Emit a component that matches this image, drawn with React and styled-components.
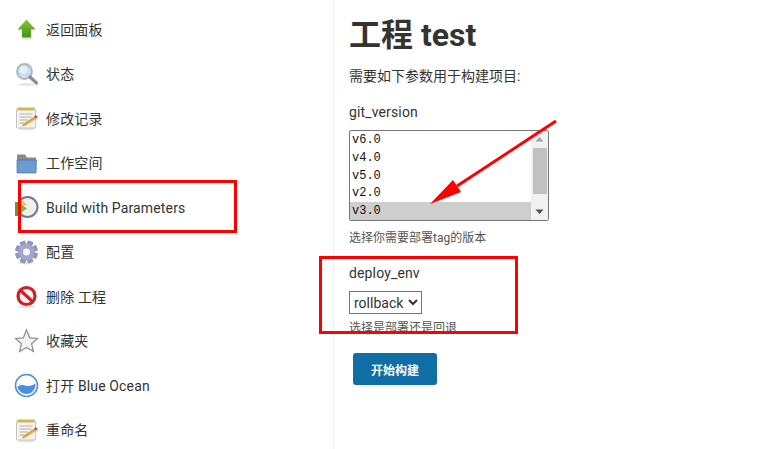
import React from "react";
import styled, { createGlobalStyle } from "styled-components";

const Global = createGlobalStyle`
  html, body { margin: 0; padding: 0; background: #fff; }
  body { width: 759px; height: 449px; overflow: hidden; font-family: Roboto, "Noto Sans CJK SC", sans-serif; color: #333; }
`;
const Page = styled.div`position: relative; display: flex; width: 759px; height: 449px; overflow: hidden;`;
const Sidebar = styled.nav`
  width: 334px; height: 449px; box-sizing: border-box; border-right: 1px solid #eee;
  padding: 7.6px 0 0 14px; display: flex; flex-direction: column; flex: none;
`;
const Row = styled.div`display: flex; align-items: center; gap: 7px; height: 44.5px; flex: none;`;
const IconBox = styled.span`width: 25px; height: 25px; display: flex; align-items: center; justify-content: center; flex: none;`;
const Label = styled.span`font-size: 14px; line-height: 18px; letter-spacing: 0.14px; color: #333; white-space: nowrap;`;
const Main = styled.main`padding: 12px 0 0 15px; display: flex; flex-direction: column; align-items: flex-start;`;
const Title = styled.h1`margin: 0; font-size: 32px; line-height: 46px; font-weight: 700; color: #333;`;
const Intro = styled.p`margin: 8px 0 0; font-size: 14px; line-height: 20px;`;
const ParamName = styled.div`margin-top: ${p => p.$top}px; font-size: 14px; line-height: 20px; letter-spacing: 0.14px;`;
const ListBox = styled.div`
  margin-top: 8px; width: 200px; height: 91px; box-sizing: border-box; border: 1px solid #767676; border-radius: 2px;
  display: flex; overflow: hidden; background: #fff;
`;
const Options = styled.div`flex: 1; display: flex; flex-direction: column;`;
const Option = styled.div`
  height: 17.8px; line-height: 19px; padding-left: 2px; flex: none; font-family: "Liberation Mono", monospace; font-size: 12px; color: #111;
  background: ${p => (p.$selected ? "#cecece" : "transparent")};
`;
const Track = styled.div`width: 17px; flex: none; background: #f1f1f1; display: flex; flex-direction: column; align-items: center;`;
const ArrowBtn = styled.svg`width: 17px; height: 17px; flex: none;`;
const Thumb = styled.div`width: 14px; height: 46px; background: #c1c1c1; flex: none;`;
const Spacer = styled.div`flex: 1;`;
const Help = styled.div`margin-top: ${p => p.$top}px; font-size: 12px; line-height: 16px; color: #555;`;
const Choice = styled.select`
  margin: 8px 0 0; width: 73px; height: 23px; font-family: Roboto, sans-serif; font-size: 14px; color: #333;
  background: #fff; border: 1px solid #767676; border-radius: 0; padding: 0;
`;
const Build = styled.button`
  margin: 17px 0 0 4px; width: 84px; height: 32px; border: none; border-radius: 3px; background: #0f6ea3; color: #fff;
  font-family: Roboto, "Noto Sans CJK SC", sans-serif; font-size: 12px; font-weight: 700; padding: 0;
`;
const RedBox = styled.div`
  position: absolute; box-sizing: border-box; border: 3px solid #f00;
  left: ${p => p.$l}px; top: ${p => p.$t}px; width: ${p => p.$w}px; height: ${p => p.$h}px;
`;
const Overlay = styled.svg`position: absolute; left: 0; top: 0; width: 759px; height: 449px; pointer-events: none;`;

const Shadow = ({ y = 23 }) => <ellipse cx="12.500" cy={y} rx="9" ry="1.500" fill="#000" opacity=".1"/>;
const Up = () => (
  <svg width="25" height="25" viewBox="0 0 25 25"><defs><linearGradient id="g1" x1="0" y1="0" x2="0" y2="1"><stop offset="0" stopColor="#86c73f"/><stop offset="1" stopColor="#3f9412"/></linearGradient></defs>
    <ellipse cx="12.500" cy="21.500" rx="6" ry="1" fill="#000" opacity=".12"/>
    <path d="M12.500 2.500 L21.500 12.500 H17 V20.500 H8 V12.500 H3.500 Z" fill="url(#g1)"/></svg>
);
const Search = () => (
  <svg width="25" height="25" viewBox="0 0 25 25"><Shadow y={22.500}/>
    <circle cx="10.500" cy="9.500" r="7.500" fill="#c6dcf2" stroke="#b2b6bc" strokeWidth="1.800"/><circle cx="9.500" cy="8" r="4" fill="#e6f0fa"/>
    <path d="M16 15 L22.500 21" stroke="#8e8e88" strokeWidth="3.200" strokeLinecap="round"/></svg>
);
const Notepad = () => (
  <svg width="25" height="25" viewBox="0 0 25 25"><Shadow y={23}/>
    <rect x="2.500" y="3" width="19" height="19" rx="1" fill="#f4f4f0" stroke="#b5b5b5" strokeWidth=".8"/>
    <rect x="3.500" y="1.500" width="17" height="3" fill="#d3b655"/>
    <path d="M5.500 8h13M5.500 11h12M5.500 14h8M5.500 17h5" stroke="#b0b0b0" strokeWidth="1"/>
    <path d="M9 18 L20 10.500 L22.500 12.500 L11.500 19.500 L8 20.500 Z" fill="#e6a33a"/><path d="M20 10.500 L22.500 12.500 L23.800 11 L21.500 9Z" fill="#c9463c"/></svg>
);
const Folder = () => (
  <svg width="25" height="25" viewBox="0 0 25 25"><path d="M3 3.500h8l2 3h9v7H3Z" fill="#8a8a8a"/><path d="M3 9h19.500l-.5 13H3Z" fill="#6c9bd2" stroke="#4a74a3" strokeWidth=".7"/></svg>
);
const Clock = () => (
  <svg width="25" height="25" viewBox="0 0 25 25"><circle cx="13.500" cy="12" r="10" fill="#f1efe6" stroke="#77739a" strokeWidth="2"/>
    <path d="M7 4 L13 10 L8 11Z" fill="#d9c873"/><path d="M1 7 H5 V21 H1Z" fill="#5f9a36"/><path d="M5 8 L13 13.500 L5 19Z" fill="#72b842"/></svg>
);
const Gear = () => (
  <svg width="26" height="26" viewBox="0 0 26 26"><Shadow y={24.500}/><g fill="#9094bf">{[0, 45, 90, 135].map(a => <rect key={a} x="10" y="1" width="6" height="24" rx="1" transform={`rotate(${a + 22} 13 13)`}/>)}</g>
    <circle cx="13" cy="13" r="8.500" fill="#a4a7cb"/><circle cx="13" cy="13" r="3.600" fill="#f7f7f7"/></svg>
);
const NoEntry = () => (
  <svg width="25" height="25" viewBox="0 0 25 25"><Shadow y={23}/><circle cx="12.500" cy="12" r="8.500" fill="#f3f3f3" stroke="#cf2027" strokeWidth="3.200"/><path d="M6.500 6.500 L18.500 17.500" stroke="#cf2027" strokeWidth="3.200"/></svg>
);
const Star = () => (
  <svg width="26" height="26" viewBox="0 0 26 26"><path d="M13 1.500 L16.300 9.700 L24.500 10.400 L18.300 15.900 L20.200 24 L13 19.700 L5.800 24 L7.700 15.900 L1.500 10.400 L9.700 9.700 Z" fill="#f3f3f3" stroke="#8f8f8f" strokeWidth="1.300"/></svg>
);
const Ocean = () => (
  <svg width="25" height="25" viewBox="0 0 25 25"><circle cx="12.500" cy="12.500" r="11" fill="#fff" stroke="#4a90e2" strokeWidth="1.600"/>
    <path d="M3.500 14 C7 10.500 10 12.500 13 13 C16 13.500 19 12 21.500 10.500 C22 16 18 21 12.500 21 C8 21 4.500 18 3.500 14Z" fill="#4a90e2"/></svg>
);

const items = [
  [Up, "返回面板"], [Search, "状态"], [Notepad, "修改记录"], [Folder, "工作空间"],
  [Clock, "Build with Parameters"], [Gear, "配置"], [NoEntry, "删除 工程"], [Star, "收藏夹"],
  [Ocean, "打开 Blue Ocean"], [Notepad, "重命名"],
];

export default function App() {
  return (
    <Page>
      <Global />
      <Sidebar>
        {items.map(([Icon, text]) => (
          <Row key={text}><IconBox><Icon /></IconBox><Label>{text}</Label></Row>
        ))}
      </Sidebar>
      <Main>
        <Title>工程 test</Title>
        <Intro>需要如下参数用于构建项目:</Intro>
        <ParamName $top={16}>git_version</ParamName>
        <ListBox>
          <Options>
            {["v6.0", "v4.0", "v5.0", "v2.0", "v3.0"].map(v => <Option key={v} $selected={v === "v3.0"}>{v}</Option>)}
          </Options>
          <Track>
            <ArrowBtn viewBox="0 0 17 17"><path d="M8.500 6 L12.500 10.500 H4.500Z" fill="#a3a3a3"/></ArrowBtn>
            <Thumb />
            <Spacer />
            <ArrowBtn viewBox="0 0 17 17"><path d="M4.500 6.500 H12.500 L8.500 11Z" fill="#505050"/></ArrowBtn>
          </Track>
        </ListBox>
        <Help $top={9}>选择你需要部署tag的版本</Help>
        <ParamName $top={17}>deploy_env</ParamName>
        <Choice defaultValue="rollback"><option>rollback</option><option>deploy</option></Choice>
        <Help $top={6}>选择是部署还是回退</Help>
        <Build>开始构建</Build>
      </Main>
      <RedBox $l={18} $t={180} $w={219} $h={53} />
      <RedBox $l={319} $t={256} $w={199} $h={78} />
      <Overlay viewBox="0 0 759 449">
        <path d="M556 121 L457 186" stroke="#f00" strokeWidth="3" fill="none"/>
        <path d="M430 204 L453 180 L461 192 Z" fill="#f00"/>
      </Overlay>
    </Page>
  );
}
